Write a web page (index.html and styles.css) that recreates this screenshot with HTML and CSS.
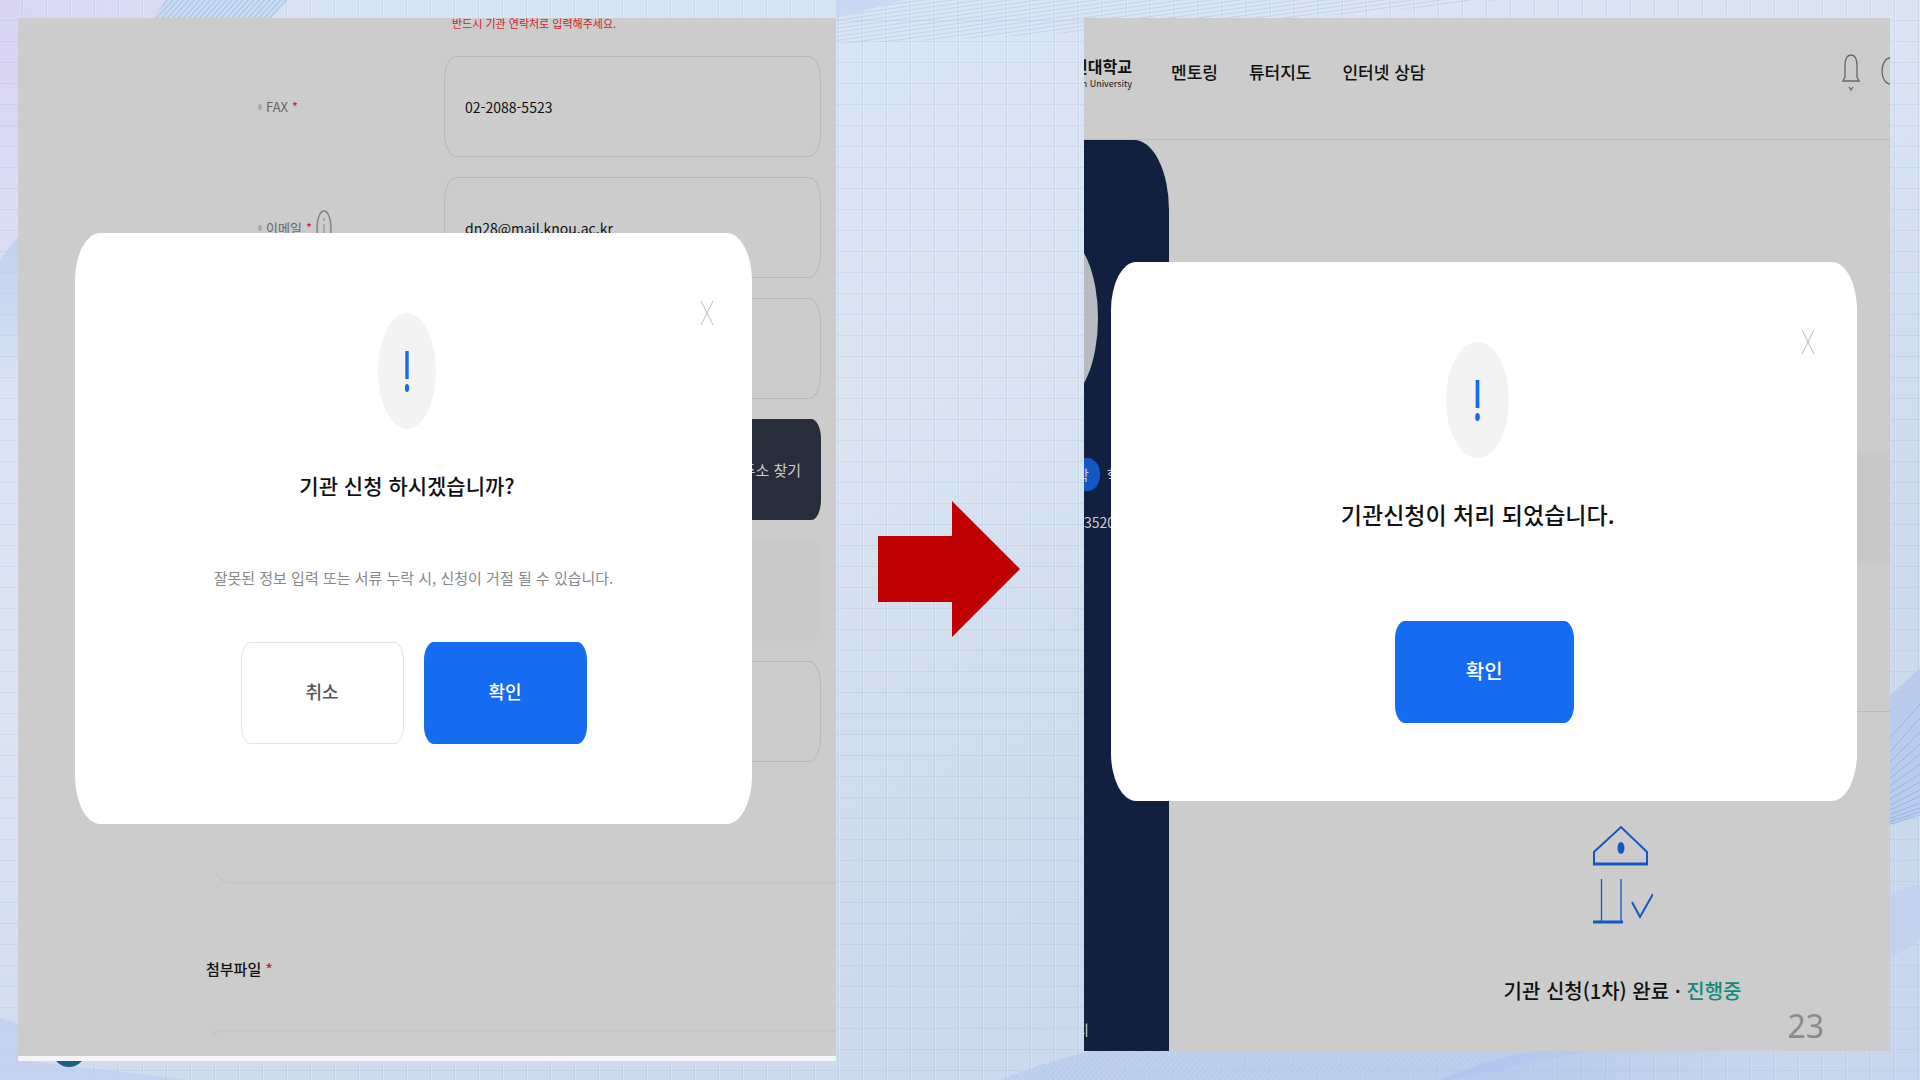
FILE: index.html
```html
<!DOCTYPE html>
<html lang="ko">
    <head>
        <meta charset="utf-8">
        <title>기관 신청</title>
        <link rel="stylesheet" href="styles.css">
    </head>
    <body>
        <div class="slide">
            <svg class="waves" viewBox="0 0 1920 1080" preserveAspectRatio="none" aria-hidden="true">
                <defs>
                    <pattern id="steep" width="4" height="4" patternUnits="userSpaceOnUse" patternTransform="rotate(42)">
                        <rect width="1" height="4" fill="#8eaedb" />
                    </pattern>
                    <pattern id="shallow" width="4" height="4" patternUnits="userSpaceOnUse" patternTransform="rotate(-8)">
                        <rect width="4" height="1" fill="#9fb6dc" />
                    </pattern>
                    <linearGradient id="fadeDown" x2="0" y2="1">
                        <stop offset="0" stop-color="#b9cbef" />
                        <stop offset="1" stop-color="#b9cbef" stop-opacity="0" />
                    </linearGradient>
                    <linearGradient id="fadeRight">
                        <stop offset="0" stop-color="#a9beec" />
                        <stop offset="1" stop-color="#a9beec" stop-opacity="0" />
                    </linearGradient>
                </defs>
                <path d="M166 0 L288 0 L270 20 L152 20 Z" fill="#c3d8f2" opacity=".7" />
                <path d="M166 0 L288 0 L270 20 L152 20 Z" fill="url(#steep)" opacity=".6" />
                <path d="M836 18 L905 0 L1500 0 Q1200 30 836 44 Z" fill="url(#shallow)" opacity=".4" />
                <path d="M836 18 L905 0 L836 0 Z" fill="#cdd6f2" />
                <path d="M0 260 Q10 245 20 235 V400 H0 Z" fill="url(#fadeDown)" opacity=".7" />
                <path d="M0 1018 L20 1024 V1060 L190 1080 H0 Z" fill="#b9cdf2" opacity=".6" />
                <path d="M1000 1080 Q1150 1020 1300 1040 H1640 L1450 1080 Z" fill="#b4c8ef" opacity=".5" />
                <path d="M1000 1080 Q1150 1020 1300 1040 H1560 L1450 1080 Z" fill="url(#steep)" opacity=".2" />
                <path d="M1440 1080 Q1520 1045 1600 1045 H1800 V1080 Z" fill="url(#fadeRight)" opacity=".6" />
                <path d="M1885 700 L1920 668 V814 L1885 826 Z" fill="#b4c8ee" opacity=".8" />
                <path d="M1885 895 L1920 884 V940 L1885 962 Z" fill="#bfd0ef" opacity=".7" />
                <path d="M1888 740 L1920 704 M1888 754 L1920 718 M1888 764 L1920 732 M1888 773 L1920 744 M1888 780 L1920 754 M1888 787 L1920 764 M1888 794 L1920 774 M1888 800 L1920 782 M1888 806 L1920 790 M1888 811 L1920 796 M1888 815 L1920 803 M1888 819 L1920 808 M1888 822 L1920 812 M1888 825 L1920 815" fill="none" stroke="#86a3d6" opacity=".6" />
            </svg>
            <span class="bullet"></span>

            <section class="panel panel-form">
                <form class="form">
                    <p class="hint">반드시 기관 연락처로 입력해주세요.</p>
                    <div class="card card-fields">
                        <div class="row">
                            <label for="fax">FAX <em>*</em></label>
                            <input class="field" type="text" id="fax" value="02-2088-5523">
                        </div>
                        <div class="row">
                            <label for="email">이메일 <em>*</em>
                                <svg class="info" width="16" height="38" viewBox="0 0 16 38" aria-hidden="true">
                                    <ellipse cx="8" cy="19" rx="7" ry="17" fill="none" stroke="#7d848c" stroke-width="1.5" />
                                    <path d="M8 15 V28 M8 9 V12" stroke="#7d848c" />
                                </svg>
                            </label>
                            <input class="field" type="text" id="email" value="dn28@mail.knou.ac.kr">
                        </div>
                        <div class="row">
                            <input class="field" type="text" aria-label="홈페이지">
                        </div>
                        <div class="row">
                            <div class="address">
                                <input class="field" type="text" aria-label="우편번호">
                                <button class="find" type="button">주소 찾기</button>
                            </div>
                        </div>
                        <div class="row">
                            <input class="field" type="text" aria-label="주소" disabled>
                        </div>
                        <div class="row">
                            <input class="field" type="text" aria-label="상세주소">
                        </div>
                    </div>
                    <h2 class="subtitle">첨부파일 <em>*</em></h2>
                    <div class="card card-files"></div>
                </form>

                <div class="modal modal-ask" role="dialog" aria-labelledby="askTitle">
                    <button class="close" type="button" aria-label="닫기">
                        <svg viewBox="0 0 14 26" preserveAspectRatio="none"><path d="M1 1 L13 25 M13 1 L1 25" /></svg>
                    </button>
                    <div class="modal-head">
                        <svg class="mark" viewBox="0 0 60 116" preserveAspectRatio="none" aria-hidden="true">
                            <ellipse cx="30" cy="58" rx="30" ry="58" fill="#f3f3f3" />
                            <path d="M30 38 V66" stroke="#156cf0" stroke-width="3.5" />
                            <ellipse cx="30" cy="75" rx="2.2" ry="4" fill="#156cf0" />
                        </svg>
                        <h1 class="modal-title" id="askTitle">기관 신청 하시겠습니까?</h1>
                    </div>
                    <p class="modal-text">잘못된 정보 입력 또는 서류 누락 시, 신청이 거절 될 수 있습니다.</p>
                    <div class="buttons">
                        <button class="btn" type="button">취소</button>
                        <button class="btn btn-primary" type="button">확인</button>
                    </div>
                </div>
            </section>

            <div class="between">
                <svg class="arrow" viewBox="0 0 142 136" aria-hidden="true">
                    <path d="M0 35 H74 V0 L142 68 L74 136 V101 H0 Z" fill="#c00000" />
                </svg>
            </div>

            <section class="panel panel-done">
                <header class="top">
                    <a class="logo" href="#"><b>한국방송통신대학교</b><small>Korea National Open University</small></a>
                    <nav class="menu">
                        <a href="#">멘토링</a>
                        <a href="#">튜터지도</a>
                        <a href="#">인터넷 상담</a>
                    </nav>
                    <div class="tools">
                        <svg width="18" height="38" viewBox="0 0 18 38" fill="none" stroke="#666" stroke-width="1.3" aria-hidden="true">
                            <path d="M1 28 H17 L15 24 V13 Q15 2 9 2 Q3 2 3 13 V24 Z M7 34 L9 37 L11 34" />
                        </svg>
                        <svg width="9" height="38" viewBox="0 0 9 38" fill="none" stroke="#666" stroke-width="1.3" aria-hidden="true">
                            <ellipse cx="9" cy="18" rx="8" ry="13" />
                        </svg>
                    </div>
                </header>
                <div class="content">
                    <aside class="side">
                        <svg class="avatar" width="14" height="164" viewBox="0 0 14 164" aria-hidden="true">
                            <ellipse cx="-22" cy="82" rx="36" ry="82" fill="#b8bbc0" />
                        </svg>
                        <p class="person"><span class="badge">대학</span><span>학생</span></p>
                        <p class="number">352018</p>
                        <a class="side-link" href="#">공지</a>
                    </aside>
                    <div class="main">
                        <div class="band"></div>
                        <div class="result">
                            <svg width="60" height="100" viewBox="0 0 60 100" fill="none" stroke="#1157c6" stroke-width="2" aria-hidden="true">
                                <path d="M1 39 V27 L28 2 L54 27 V39" />
                                <path d="M0 39 H55" stroke-width="3" />
                                <ellipse cx="28" cy="23" rx="3.5" ry="6" fill="#1157c6" stroke="none" />
                                <path d="M8.5 54 V96 M28 54 V96" stroke-width="1.3" />
                                <path d="M0 97 H30" stroke-width="3" />
                                <path d="M39 77 L47 92 L60 69" />
                            </svg>
                            <h2 class="result-title">기관 신청(1차) 완료 · <span>진행중</span></h2>
                        </div>
                    </div>
                </div>

                <div class="modal modal-done" role="dialog" aria-labelledby="doneTitle">
                    <button class="close" type="button" aria-label="닫기">
                        <svg viewBox="0 0 14 26" preserveAspectRatio="none"><path d="M1 1 L13 25 M13 1 L1 25" /></svg>
                    </button>
                    <div class="modal-head">
                        <svg class="mark" viewBox="0 0 60 116" preserveAspectRatio="none" aria-hidden="true">
                            <ellipse cx="30" cy="58" rx="30" ry="58" fill="#f3f3f3" />
                            <path d="M30 38 V66" stroke="#156cf0" stroke-width="3.5" />
                            <ellipse cx="30" cy="75" rx="2.2" ry="4" fill="#156cf0" />
                        </svg>
                        <h1 class="modal-title" id="doneTitle">기관신청이 처리 되었습니다.</h1>
                    </div>
                    <div class="buttons">
                        <button class="btn btn-primary" type="button">확인</button>
                    </div>
                </div>
            </section>
            <span class="page">23</span>
        </div>
    </body>
</html>
```
FILE: styles.css
```css
* {
    box-sizing: border-box;
}

body {
    margin: 0;
    font-family: "Noto Sans CJK KR", "Noto Sans", sans-serif;
    color: #111;
}

h1, h2, p {
    margin: 0;
}

em {
    color: #d0202e;
    font-style: normal;
}

a {
    color: inherit;
    text-decoration: none;
}

button, input {
    font-family: inherit;
}

/* SLIDE */
.slide {
    position: relative;
    display: flex;
    align-items: flex-start;
    min-height: 100vh;
    padding: 18px 30px 18px 18px;
    overflow: hidden;
    background:
        repeating-linear-gradient(90deg, transparent 0 22px, rgba(150, 175, 215, .2) 22px 23px, rgba(255, 255, 255, .2) 23px 24px),
        repeating-linear-gradient(180deg, transparent 0 20px, rgba(150, 175, 215, .2) 20px 21px),
        radial-gradient(circle at 0 4%, #dad5f5, rgba(218, 213, 245, 0) 16%),
        linear-gradient(160deg, #d8e4f2 0%, #dbe5f2 40%, #d2dded 58%, #cddaec 80%, #c6d6ee 100%);
}

.waves {
    position: absolute;
    top: 0;
    left: 0;
    width: 100%;
    height: 100%;
}

.bullet {
    position: absolute;
    left: 52px;
    top: 1033px;
    width: 34px;
    height: 34px;
    border-radius: 50%;
    background: #1f5f86;
}

.page {
    position: absolute;
    right: 96px;
    top: 1004px;
    font-family: "Noto Sans", sans-serif;
    font-size: 32px;
    line-height: 44px;
    color: #8b8b8b;
}

.panel {
    position: relative;
    overflow: hidden;
    background: #ccc;
}

.panel-form {
    flex: 818 1 0;
    border-bottom: 5px solid #f5f5f5;
}

.between {
    flex: 248 1 0;
    align-self: center;
    padding-top: 58px;
}

.arrow {
    display: block;
    width: 142px;
    margin-left: 42px;
}

.panel-done {
    flex: 806 1 0;
}

/* FORM */
.hint {
    margin: -6px 0 0 434px;
    font-size: 11px;
    line-height: 22px;
    color: #d0202e;
}

.card {
    margin: 0 -40px 0 188px;
    border: 2px solid #c6c6c6;
    border-left-color: transparent;
}

.card-fields {
    display: flex;
    flex-direction: column;
    gap: 20px;
    padding: 22px 53px 120px 50px;
    border-top: 0;
    border-radius: 0 0 0 24px / 0 0 0 50px;
}

.row {
    display: grid;
    grid-template-columns: 186px 1fr;
    align-items: center;
}

.row label {
    display: flex;
    align-items: center;
    gap: 4px;
    font-size: 13px;
    line-height: 20px;
    color: #666;
}

.row label::before {
    content: "";
    width: 4px;
    height: 6px;
    border-radius: 50%;
    background: #aaa;
}

.field {
    grid-column: 2;
    width: 100%;
    height: 101px;
    padding: 0 20px;
    border: 1px solid #b8b8b8;
    border-radius: 12px / 24px;
    background: transparent;
    font-size: 14px;
    color: #111;
}

.field:disabled {
    border-color: #c9c9c9;
    background: #c9c9c9;
}

.address {
    grid-column: 2;
    display: flex;
    gap: 8px;
}

.find {
    flex: none;
    padding: 0 20px;
    border: 0;
    border-radius: 10px / 20px;
    background: #282d3b;
    font-size: 15px;
    color: #ccc;
}

.subtitle {
    margin: 70px 0 46px 188px;
    font-size: 15px;
    font-weight: 500;
    line-height: 30px;
}

.card-files {
    height: 26px;
    border-bottom: 0;
    border-radius: 24px 0 0 0 / 50px 0 0 0;
}

/* MODALS */
.modal {
    position: absolute;
    display: flex;
    flex-direction: column;
    align-items: center;
    padding: 80px 0;
    border-radius: 25px / 48px;
    background: #fff;
}

.modal-ask {
    top: 215px;
    left: 7%;
    right: 10.3%;
}

.modal-done {
    top: 244px;
    left: 3.4%;
    right: 4.1%;
    padding-bottom: 78px;
}

.modal-head {
    display: flex;
    flex-direction: column;
    align-items: center;
    gap: 35px;
    padding-right: 13px;
}

.mark {
    width: 58px;
    height: 116px;
}

.modal-done .mark {
    width: 63px;
}

.modal-title {
    font-size: 21px;
    font-weight: 500;
    line-height: 42px;
}

.modal-done .modal-title {
    font-size: 23px;
}

.modal-text {
    margin-top: 56px;
    font-size: 15px;
    line-height: 32px;
    color: #888;
}

.close {
    position: absolute;
    top: 67px;
    right: 38px;
    padding: 0;
    border: 0;
    background: none;
}

.close svg {
    display: block;
    width: 14px;
    height: 26px;
    fill: none;
    stroke: #bbb;
}

.modal-done .close {
    right: 42px;
}

.buttons {
    display: flex;
    gap: 20px;
    margin-top: 48px;
}

.modal-done .buttons {
    margin-top: 86px;
}

.btn {
    width: 163px;
    height: 102px;
    padding: 0 0 4px;
    border: 1px solid #e4e4e4;
    border-radius: 10px / 18px;
    background: #fff;
    font-size: 18px;
    font-weight: 500;
    color: #555;
}

.btn-primary {
    border-color: #156cf0;
    background: #156cf0;
    color: #fff;
}

.modal-done .btn {
    width: 179px;
    font-size: 20px;
}

/* DONE PAGE */
.top {
    display: flex;
    align-items: center;
    height: 122px;
    padding-bottom: 14px;
    border-bottom: 1px solid #bbb;
}

.logo {
    display: flex;
    flex-direction: column;
    align-items: flex-end;
    width: 48px;
    overflow: hidden;
    white-space: nowrap;
}

.logo b {
    font-size: 16px;
    line-height: 24px;
}

.logo small {
    font-size: 9px;
    line-height: 12px;
}

.menu {
    display: flex;
    gap: 31px;
    margin-left: 39px;
    font-size: 17px;
    font-weight: 500;
}

.tools {
    display: flex;
    gap: 21px;
    margin-left: auto;
}

.content {
    display: flex;
    height: 911px;
}

.side {
    display: flex;
    flex-direction: column;
    flex: none;
    width: 85px;
    padding: 96px 0 5px;
    overflow: hidden;
    border-top-right-radius: 35px 70px;
    background: #12203f;
    color: #ccc;
    font-size: 14px;
    line-height: 33px;
    white-space: nowrap;
}

.person {
    display: flex;
    gap: 7px;
    margin: 58px 0 15px -28px;
}

.badge {
    padding: 0 11px 0 7px;
    border-radius: 12px / 16px;
    background: #1157c6;
}

.side-link {
    width: 5px;
    margin-top: auto;
    direction: rtl;
}

.main {
    display: flex;
    flex-direction: column;
    flex: 1;
    padding-top: 313px;
}

.band {
    height: 259px;
    border-bottom: 1px solid #bbb;
    background: linear-gradient(#c8c8c8 110px, transparent 110px);
}

.result {
    display: flex;
    flex-direction: column;
    align-items: center;
    gap: 50px;
    padding: 113px 0 0 186px;
}

.result-title {
    font-size: 20px;
    font-weight: 500;
    line-height: 32px;
}

.result-title span {
    color: #0f8a80;
}
```
